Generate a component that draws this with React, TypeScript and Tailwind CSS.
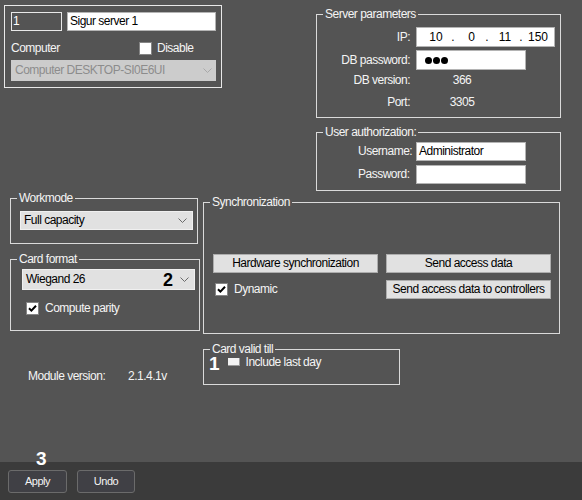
import React from "react";

function Check({ checked = false }: { checked?: boolean }) {
  return (
    <div className="w-[13px] h-[13px] shrink-0 bg-white border border-[#858585] flex items-center justify-center">
      {checked && (
        <svg width="9" height="9" viewBox="0 0 9 9">
          <polyline points="1,4.2 3.4,6.6 8,1.8" fill="none" stroke="#000" strokeWidth="2" />
        </svg>
      )}
    </div>
  );
}

function Chevron() {
  return (
    <svg width="9" height="5" viewBox="0 0 9 5" className="shrink-0">
      <path d="M0.5 0.5 L4.5 4.5 L8.5 0.5" fill="none" stroke="#6a6a6a" strokeWidth="1" />
    </svg>
  );
}

function Legend({ children }: { children: React.ReactNode }) {
  return <legend className="ml-[6px] px-[2px] leading-[14px]">{children}</legend>;
}

function WinButton({ children }: { children: React.ReactNode }) {
  return (
    <div className="h-[19px] bg-[#e1e1e1] border border-[#adadad] text-black flex items-center justify-center leading-[15px]">
      {children}
    </div>
  );
}

export default function App() {
  return (
    <div className="relative w-[582px] h-[500px] bg-[#545454] text-[#f4f4f4] text-[12px] leading-[15px] tracking-[-0.5px] font-['Liberation_Sans',Arial,sans-serif] flex flex-col overflow-hidden">
      {/* Section A */}
      <div className="flex items-start h-[191px] shrink-0">
        <div className="mt-[5px] ml-[4px] w-[218px] h-[83px] border border-[#e8e8e8] pt-[6px] pl-[6px]">
          <div className="flex">
            <div className="w-[51px] h-[19px] border border-[#e8e8e8] pl-[1px] leading-[17px] text-white">1</div>
            <div className="ml-[5px] w-[149px] h-[19px] bg-white border border-[#b4b4b4] text-black pl-[2px] leading-[17px]">
              Sigur server 1
            </div>
          </div>
          <div className="mt-[11px] h-[13px] flex items-center">
            <span className="w-[128px]">Computer</span>
            <Check />
            <span className="ml-[5px]">Disable</span>
          </div>
          <div className="mt-[5px] w-[205px] h-[21px] bg-[#cccccc] flex items-center pl-[4px] text-[#8c8c8c]">
            <span>Computer DESKTOP-SI0E6UI</span>
            <span className="ml-auto mr-[4px] flex">
              <svg width="9" height="5" viewBox="0 0 9 5">
                <path d="M0.5 0.5 L4.5 4.5 L8.5 0.5" fill="none" stroke="#a8a8a8" strokeWidth="1" />
              </svg>
            </span>
          </div>
        </div>

        <div className="ml-[94px] w-[245px] flex flex-col">
          <fieldset className="mt-[7px] h-[111px] border border-[#dadada]">
            <Legend>Server parameters</Legend>
            <div className="mt-[6px] h-[20px] flex items-center">
              <span className="w-[93px] text-right">IP:</span>
              <div className="ml-[6px] w-[139px] h-[20px] bg-white border border-[#b4b4b4] text-black flex items-center pl-[4px] tracking-normal">
                <span className="w-[30px] text-center">10</span>
                <span className="w-[4px] text-center">.</span>
                <span className="w-[30px] text-center pl-[3px]">0</span>
                <span className="w-[4px] text-center">.</span>
                <span className="w-[30px] text-center pl-[2px]">11</span>
                <span className="w-[4px] text-center">.</span>
                <span className="w-[30px] text-center">150</span>
              </div>
            </div>
            <div className="mt-[3px] h-[20px] flex items-center">
              <span className="w-[93px] text-right">DB password:</span>
              <div className="ml-[6px] w-[110px] h-[20px] bg-white border border-[#b4b4b4] text-black flex items-center pl-[8px] gap-[1px]">
                <span className="w-[7px] h-[7px] rounded-full bg-black" />
                <span className="w-[7px] h-[7px] rounded-full bg-black" />
                <span className="w-[7px] h-[7px] rounded-full bg-black" />
              </div>
            </div>
            <div className="mt-[1px] h-[18px] flex items-center">
              <span className="w-[93px] text-right">DB version:</span>
              <span className="ml-[6px] w-[92px] text-center">366</span>
            </div>
            <div className="mt-[4px] h-[18px] flex items-center">
              <span className="w-[93px] text-right">Port:</span>
              <span className="ml-[6px] w-[92px] text-center">3305</span>
            </div>
          </fieldset>

          <fieldset className="mt-[7px] h-[66px] border border-[#dadada]">
            <Legend>User authorization:</Legend>
            <div className="mt-[3px] h-[19px] flex items-center">
              <span className="pl-[41px] w-[99px]">Username:</span>
              <div className="w-[110px] h-[19px] bg-white border border-[#b4b4b4] text-black pl-[2px] leading-[17px]">
                Administrator
              </div>
            </div>
            <div className="mt-[4px] h-[19px] flex items-center">
              <span className="pl-[41px] w-[99px]">Password:</span>
              <div className="w-[110px] h-[19px] bg-white border border-[#b4b4b4]" />
            </div>
          </fieldset>
        </div>
      </div>

      {/* Section B */}
      <div className="flex items-start h-[143px] shrink-0">
        <div className="ml-[10px] w-[190px] flex flex-col">
          <fieldset className="w-[188px] h-[53px] border border-[#dadada]">
            <Legend>Workmode</Legend>
            <div className="mt-[6px] ml-[9px] w-[173px] h-[19px] bg-[#e1e1e1] border border-[#f0f0f0] text-black flex items-center pl-[3px]">
              <span>Full capacity</span>
              <span className="ml-auto mr-[5px] flex">
                <Chevron />
              </span>
            </div>
          </fieldset>
          <fieldset className="mt-[8px] w-[190px] h-[79px] border border-[#dadada]">
            <Legend>Card format</Legend>
            <div className="mt-[3px] ml-[11px] w-[173px] h-[21px] bg-[#e1e1e1] border border-[#f0f0f0] text-black flex items-center pl-[3px]">
              <span>Wiegand 26</span>
              <span className="ml-auto font-bold text-[18px] leading-[18px] tracking-normal">2</span>
              <span className="ml-[7px] mr-[5px] flex">
                <Chevron />
              </span>
            </div>
            <div className="mt-[12px] ml-[15px] h-[13px] flex items-center">
              <Check checked />
              <span className="ml-[6px]">Compute parity</span>
            </div>
          </fieldset>
        </div>

        <fieldset className="ml-[3px] mt-[4px] w-[357px] h-[139px] border border-[#dadada]">
          <Legend>Synchronization</Legend>
          <div className="mt-[45px] ml-[9px] grid grid-cols-[165px_165px] gap-x-[8px] gap-y-[7px]">
            <WinButton>Hardware synchronization</WinButton>
            <WinButton>Send access data</WinButton>
            <div className="h-[19px] flex items-center pl-[2px]">
              <Check checked />
              <span className="ml-[6px]">Dynamic</span>
            </div>
            <WinButton>Send access data to controllers</WinButton>
          </div>
        </fieldset>
      </div>

      {/* Section C */}
      <div className="flex items-start shrink-0">
        <div className="w-[203px] pl-[28px] mt-[35px] flex">
          <span className="w-[100px]">Module version:</span>
          <span>2.1.4.1v</span>
        </div>
        <fieldset className="mt-[8px] w-[197px] h-[43px] border border-[#dadada]">
          <Legend>Card valid till</Legend>
          <div className="mt-[1px] pl-[5px] flex items-start">
            <span className="font-bold text-[19px] leading-[14px] tracking-normal text-white">1</span>
            <div className="ml-[8px] mt-[1px] w-[12px] h-[8px] bg-[#f2f2f2] border-b border-r border-[#9a9a9a]" />
            <span className="ml-[6px] leading-[11px]">Include last day</span>
          </div>
        </fieldset>
      </div>

      <div className="flex-1" />

      <div className="h-[38px] bg-[#3b3b3b] shrink-0 flex items-start pt-[8px] pl-[8px] gap-[10px] text-[11px]">
        <div className="w-[59px] h-[23px] border border-[#6b6b6b] rounded-[3px] bg-[#404045] flex items-center justify-center">
          Apply
        </div>
        <div className="w-[58px] h-[23px] border border-[#6b6b6b] rounded-[3px] bg-[#404045] flex items-center justify-center">
          Undo
        </div>
      </div>

      <span className="absolute left-[36px] top-[449px] font-bold text-[19px] leading-[19px] tracking-normal text-white">3</span>
    </div>
  );
}
